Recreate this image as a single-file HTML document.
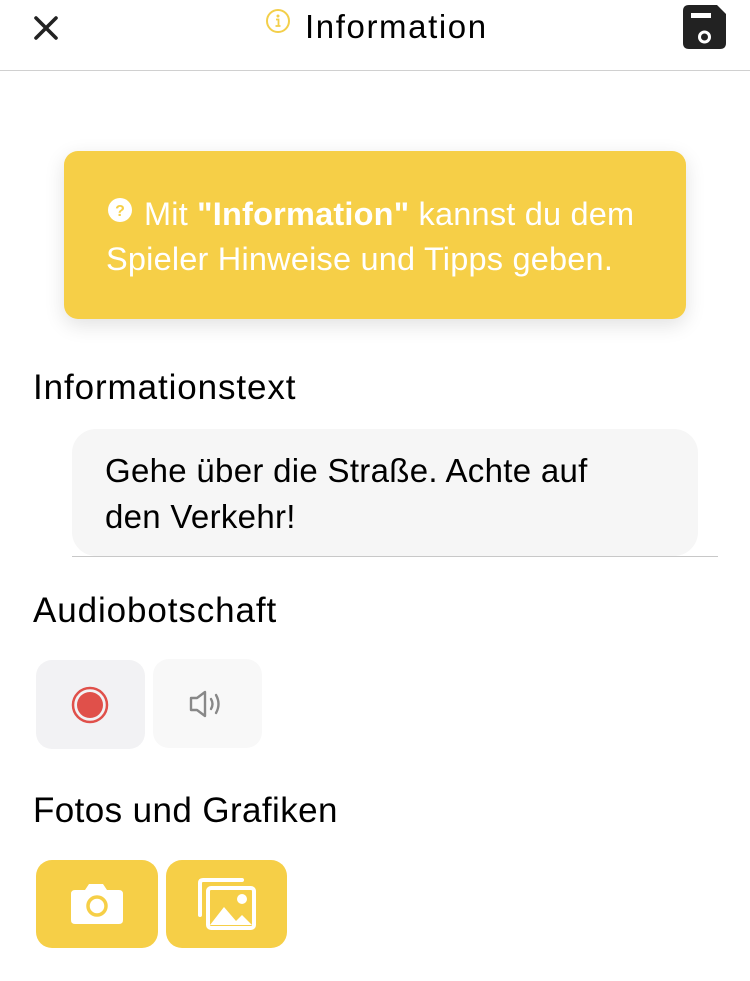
<!DOCTYPE html>
<html><head><meta charset="utf-8"><style>
*{margin:0;padding:0;box-sizing:border-box}
body{width:750px;height:981px;background:#fff;font-family:"Liberation Sans",sans-serif;position:relative;overflow:hidden;color:#000}
.a{position:absolute;white-space:nowrap}
.h{font-size:35px;line-height:40px;letter-spacing:0.9px}
.b{font-size:33px;line-height:40px;letter-spacing:0.3px}
</style></head><body>
<svg class="a" style="left:33px;top:15px" width="26" height="26" viewBox="0 0 26 26"><path d="M3 3L23 23M23 3L3 23" stroke="#222" stroke-width="3.6" stroke-linecap="round"/></svg>
<svg class="a" style="left:265px;top:8px" width="26" height="26" viewBox="0 0 26 26"><circle cx="13" cy="13" r="11" fill="none" stroke="#f3cf4a" stroke-width="2"/><circle cx="13" cy="8" r="1.5" fill="#f3cf4a"/><path d="M11 11.5h2.5v6.5M10.5 18h5" stroke="#f3cf4a" stroke-width="1.8" fill="none"/></svg>
<div class="a" style="left:305px;top:7px;font-size:33px;line-height:40px;letter-spacing:1.6px">Information</div>
<svg class="a" style="left:683px;top:5px" width="43" height="44" viewBox="0 0 43 44"><path d="M6 0H34L43 9V38Q43 44 37 44H6Q0 44 0 38V6Q0 0 6 0Z" fill="#222"/><rect x="8" y="8" width="20" height="5" fill="#fff"/><circle cx="21.5" cy="32" r="5" fill="none" stroke="#fff" stroke-width="3"/></svg>
<div class="a" style="left:0;top:70px;width:750px;height:1px;background:#d0d0d0"></div>
<div class="a" style="left:64px;top:151px;width:622px;height:168px;background:#f6cf47;border-radius:14px;box-shadow:0 6px 20px rgba(0,0,0,0.12)"></div>
<svg class="a" style="left:108px;top:198px" width="24" height="24" viewBox="0 0 24 24"><circle cx="12" cy="12" r="12" fill="#fff"/><text x="12" y="18" text-anchor="middle" font-size="16" font-weight="bold" fill="#f6cf47" font-family="Liberation Sans">?</text></svg>
<div class="a" style="left:144px;top:194px;font-size:32.5px;line-height:40px;letter-spacing:0.2px;color:#fff">Mit <b>"Information"</b> kannst du dem</div>
<div class="a" style="left:106px;top:239px;font-size:32.5px;line-height:40px;letter-spacing:0.2px;color:#fff">Spieler Hinweise und Tipps geben.</div>
<div class="a h" style="left:33px;top:368px">Informationstext</div>
<div class="a" style="left:72px;top:429px;width:626px;height:127px;background:#f6f6f6;border-radius:24px"></div>
<div class="a" style="left:72px;top:556px;width:646px;height:1px;background:#c8c8c8"></div>
<div class="a b" style="left:105px;top:451px">Gehe über die Straße. Achte auf</div>
<div class="a b" style="left:105px;top:497px">den Verkehr!</div>
<div class="a h" style="left:33px;top:591px">Audiobotschaft</div>
<div class="a" style="left:36px;top:660px;width:109px;height:89px;background:#f2f2f4;border-radius:16px"></div>
<svg class="a" style="left:71px;top:686px" width="38" height="38" viewBox="0 0 38 38"><circle cx="19" cy="19" r="17" fill="none" stroke="#e0504a" stroke-width="2.5"/><circle cx="19" cy="19" r="13" fill="#e0504a"/></svg>
<div class="a" style="left:153px;top:659px;width:109px;height:89px;background:#f8f8f8;border-radius:16px"></div>
<svg class="a" style="left:188px;top:689px" width="38" height="30" viewBox="0 0 38 30"><path d="M3 9H9L17 3V27L9 21H3Z" fill="none" stroke="#888" stroke-width="2.4" stroke-linejoin="round"/><path d="M23 10Q26 15 23 20M28 6Q33 15 28 24" fill="none" stroke="#888" stroke-width="2.4" stroke-linecap="round"/></svg>
<div class="a h" style="left:33px;top:791px;letter-spacing:0.4px">Fotos und Grafiken</div>
<div class="a" style="left:36px;top:860px;width:122px;height:88px;background:#f6cf47;border-radius:16px"></div>
<svg class="a" style="left:71px;top:882px" width="52" height="42" viewBox="0 0 52 42"><path d="M4 8H14L18 2H32L36 8H48Q52 8 52 12V38Q52 42 48 42H4Q0 42 0 38V12Q0 8 4 8Z" fill="#fff"/><circle cx="26" cy="24" r="9" fill="none" stroke="#f6cf47" stroke-width="3.5"/></svg>
<div class="a" style="left:166px;top:860px;width:121px;height:88px;background:#f6cf47;border-radius:16px"></div>
<svg class="a" style="left:196px;top:877px" width="62" height="54" viewBox="0 0 62 54"><path d="M4 38V6Q4 3 7 3H46" fill="none" stroke="#fff" stroke-width="4" stroke-linecap="round"/><rect x="12" y="11" width="46" height="40" rx="3" fill="none" stroke="#fff" stroke-width="4"/><circle cx="46" cy="22" r="5" fill="#fff"/><path d="M14 48L28 30L40 44L46 38L56 48Z" fill="#fff"/></svg>
</body></html>
